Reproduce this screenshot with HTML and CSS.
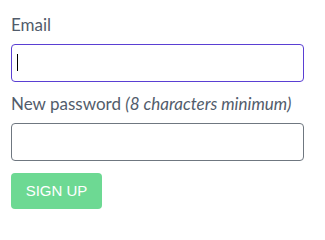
FILE: index.html
```html
<!DOCTYPE html>
<html lang="en">
<head>
<meta charset="utf-8">
<title>Sign up</title>
<link rel="stylesheet" href="styles.css">
</head>
<body>
<form class="signup">
  <label class="field-label" for="email">Email</label>
  <div class="input-wrap">
    <input id="email" class="text-input is-focused" type="email">
    <span class="caret"></span>
  </div>
  <label class="field-label" for="password">New password <em class="hint">(8 characters minimum)</em></label>
  <div class="input-wrap">
    <input id="password" class="text-input" type="password">
  </div>
  <button type="button" class="btn-signup">SIGN UP</button>
</form>
</body>
</html>
```
FILE: styles.css
```css
html, body {
  margin: 0;
  padding: 0;
  background: #ffffff;
}

.signup {
  display: flex;
  flex-direction: column;
  align-items: flex-start;
  padding: 14px 21px 0 11px;
  font-family: Lato, "Open Sans", sans-serif;
}

.field-label {
  display: block;
  font-size: 17px;
  line-height: 22px;
  color: #525c6b;
  margin-bottom: 8px;
}

.hint {
  font-style: italic;
}

.input-wrap {
  position: relative;
  align-self: stretch;
  margin-bottom: 11px;
}

.text-input {
  display: block;
  box-sizing: border-box;
  width: 100%;
  height: 38px;
  margin: 0;
  padding: 0 6px;
  border: 1px solid #6f7780;
  border-radius: 4px;
  background: #ffffff;
  outline: none;
}

.text-input.is-focused {
  border-color: #5a3fd3;
}

.caret {
  position: absolute;
  left: 6px;
  top: 10px;
  width: 1px;
  height: 17px;
  background: #000000;
}

.btn-signup {
  box-sizing: border-box;
  width: 91px;
  height: 36px;
  margin: 1px 0 0;
  padding: 0;
  border: none;
  border-radius: 4px;
  background: #6dd993;
  color: #ffffff;
  font-family: "Liberation Sans", Arial, sans-serif;
  font-size: 15px;
  line-height: 36px;
  text-align: center;
}
```
